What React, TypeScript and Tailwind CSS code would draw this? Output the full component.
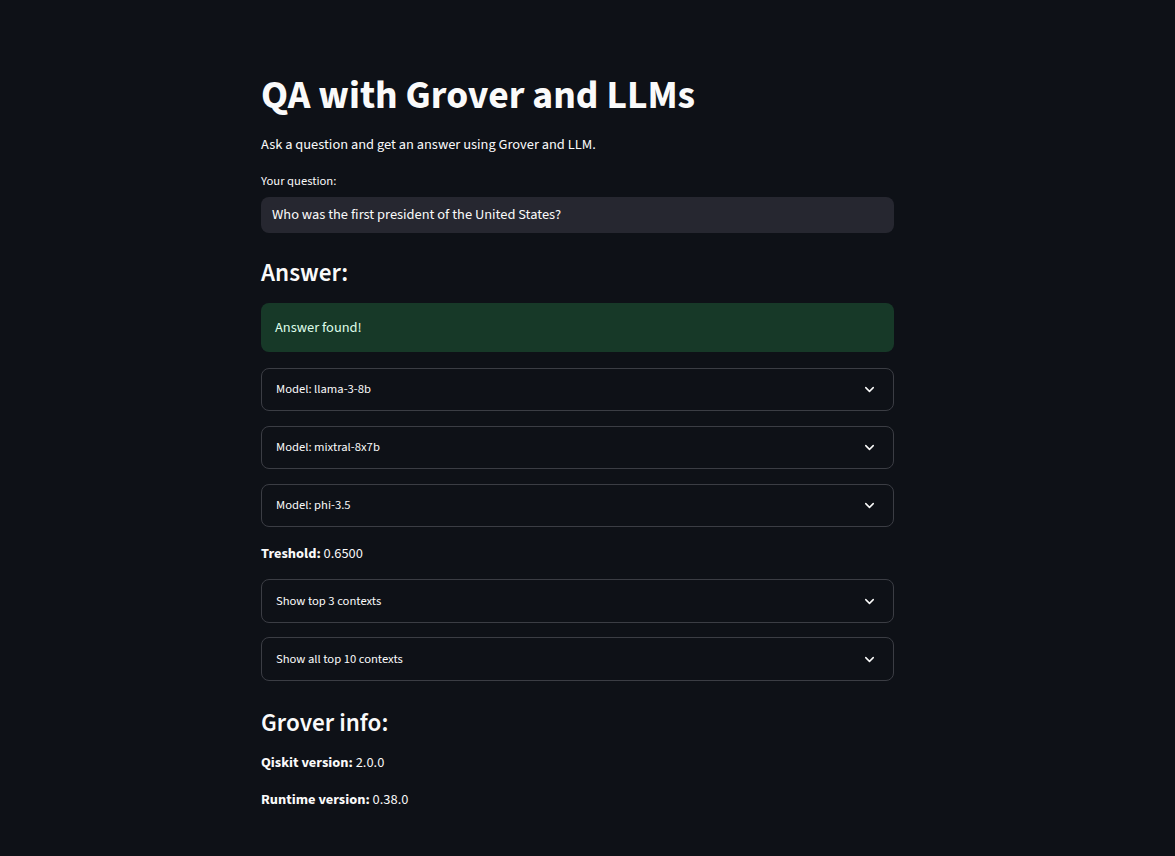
import React from 'react';
import { ChevronDown } from 'lucide-react';

const font = { fontFamily: '"Source Sans 3", "Source Sans Pro", Lato, sans-serif' };

function Expander({ label, tall }: { label: string; tall?: boolean }) {
  return (
    <div
      className={`flex items-center justify-between rounded-lg border border-[#3b3d44] pl-[14px] pr-[16px] ${tall ? 'h-[44px]' : 'h-[43px]'}`}
    >
      <span className="text-[12.6px] text-[#fafafa]">{label}</span>
      <ChevronDown size={15} strokeWidth={2.4} className="text-[#fafafa]" />
    </div>
  );
}

export default function App() {
  return (
    <div className="min-h-[856px] w-full bg-[#0e1117] text-[#fafafa]" style={font}>
      <div className="ml-[261px] w-[633px] pt-[72px] pb-[40px]">
        <h1 className="text-[39.6px] font-bold leading-[48px]">QA with Grover and LLMs</h1>
        <p className="mt-[14px] text-[14.4px] leading-[22px]">Ask a question and get an answer using Grover and LLM.</p>

        <label className="mt-[16px] block text-[12.6px] leading-[18px]">Your question:</label>
        <div className="mt-[7px] flex h-[36px] items-center rounded-lg bg-[#262730] px-[11px] text-[14.4px]">
          Who was the first president of the United States?
        </div>

        <h3 className="mt-[24px] text-[25.2px] font-semibold leading-[32px]">Answer:</h3>

        <div className="mt-[14px] flex h-[49px] items-center rounded-lg bg-[#173928] px-[14px] text-[14.4px] text-[#dffde9]">
          Answer found!
        </div>

        <div className="mt-[16px] flex flex-col gap-[15px]">
          <Expander label="Model: llama-3-8b" />
          <Expander label="Model: mixtral-8x7b" />
          <Expander label="Model: phi-3.5" />
        </div>

        <p className="mt-[16px] text-[14.4px] leading-[22px]">
          <span className="font-bold">Treshold:</span> 0.6500
        </p>

        <div className="mt-[14px] flex flex-col gap-[14px]">
          <Expander label="Show top 3 contexts" tall />
          <Expander label="Show all top 10 contexts" tall />
        </div>

        <h3 className="mt-[26px] text-[25.2px] font-semibold leading-[32px]">Grover info:</h3>

        <p className="mt-[13px] text-[14.4px] leading-[22px]">
          <span className="font-bold">Qiskit version:</span> 2.0.0
        </p>
        <p className="mt-[15px] text-[14.4px] leading-[22px]">
          <span className="font-bold">Runtime version:</span> 0.38.0
        </p>
      </div>
    </div>
  );
}
